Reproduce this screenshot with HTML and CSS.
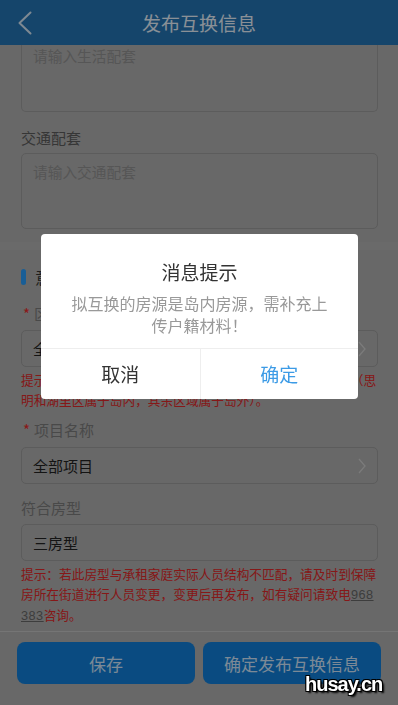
FILE: index.html
```html
<!DOCTYPE html>
<html lang="zh-CN">
<head>
<meta charset="utf-8">
<title>发布互换信息</title>
<link rel="stylesheet" href="styles.css">
</head>
<body>
<div class="app">
  <header class="topbar">
    <span class="back">
      <svg width="14" height="24" viewBox="0 0 14 24"><polyline points="12.5,1.5 1.5,12 12.5,22.5" fill="none" stroke="#d2e4f4" stroke-width="2" stroke-linecap="round" stroke-linejoin="round"/></svg>
    </span>
    <h1 class="title">发布互换信息</h1>
    <span></span>
  </header>

  <main class="form">
    <section class="card">
      <div class="area scrolled">请输入生活配套</div>
      <div class="label">交通配套</div>
      <div class="area tall">请输入交通配套</div>
    </section>
    <div class="gap"></div>
    <section class="card">
      <div class="sec-title"><span class="bar"></span>意向房源</div>
      <div class="label first"><span class="req">*</span>区域</div>
      <div class="select"><span>全部区域</span>
        <svg width="8" height="16" viewBox="0 0 8 16"><polyline points="1,1 7,8 1,15" fill="none" stroke="#cdcdcd" stroke-width="1.3"/></svg>
      </div>
      <p class="tip">提示：若选择区域与房源实际所在区域不一致，请重新选择（思明和湖里区属于岛内，其余区域属于岛外）。</p>
      <div class="label mid"><span class="req">*</span>项目名称</div>
      <div class="select"><span>全部项目</span>
        <svg width="8" height="16" viewBox="0 0 8 16"><polyline points="1,1 7,8 1,15" fill="none" stroke="#cdcdcd" stroke-width="1.3"/></svg>
      </div>
      <div class="label low">符合房型</div>
      <div class="select"><span>三房型</span></div>
      <p class="tip">提示：若此房型与承租家庭实际人员结构不匹配，请及时到保障房所在街道进行人员变更，变更后再发布，如有疑问请致电<span class="tel">968<wbr>383</span>咨询。</p>
    </section>
  </main>

  <footer class="actions">
    <button class="btn">保存</button>
    <button class="btn">确定发布互换信息</button>
  </footer>
</div>

<div class="mask"></div>

<div class="dialog">
  <div class="dlg-title">消息提示</div>
  <div class="dlg-msg">拟互换的房源是岛内房源，需补充上传户籍材料！</div>
  <div class="dlg-btns">
    <div class="dlg-btn">取消</div>
    <div class="dlg-btn ok">确定</div>
  </div>
</div>

<div class="watermark">husay.cn</div>
</body>
</html>
```

FILE: styles.css
```css
* { box-sizing: border-box; margin: 0; padding: 0; }

html, body { width: 398px; height: 705px; overflow: hidden; }

body {
  font-family: "Noto Sans CJK SC", "Noto Sans", sans-serif;
  background: #adadad;
  color: #222;
}

.app {
  display: flex;
  flex-direction: column;
  height: 705px;
}

.topbar {
  flex-shrink: 0;
  height: 45px;
  background: #2474b3;
  display: grid;
  grid-template-columns: 45px 1fr 45px;
  align-items: center;
}

.back {
  display: flex;
  padding-left: 18px;
}

.title {
  font-size: 19px;
  font-weight: 400;
  line-height: 45px;
  text-align: center;
  color: #e6f0fa;
}

.form {
  flex: 1;
  overflow: hidden;
}

.card {
  padding: 0 20px 11px 21px;
}

.area {
  border: 1px solid #999;
  border-radius: 5px;
  padding: 8px 11px;
  font-size: 14.7px;
  line-height: 20px;
  color: #8f8f8f;
}

.area.scrolled {
  height: 67px;
  border-top: none;
  border-radius: 0 0 5px 5px;
  padding-top: 1px;
}

.area.tall { height: 76px; }

.label {
  font-size: 15px;
  line-height: 22px;
  color: #5a5a5a;
  margin: 15px 0 4px;
}

.label.first { margin: 15px 0 5px; color: #7a7a7a; }
.label.mid { margin: 10px 0 6px; color: #7a7a7a; }
.label.low { margin: 13px 0 5px; color: #7a7a7a; }

.req {
  color: #e52a2a;
  margin: 0 4px 0 2px;
}

.gap {
  height: 8px;
  margin-top: 2px;
  background: #b1b1b1;
}

.sec-title {
  display: flex;
  align-items: center;
  gap: 9px;
  padding-top: 16px;
  font-size: 16px;
  line-height: 22px;
  color: #333;
}

.bar {
  width: 5px;
  height: 16px;
  border-radius: 3px;
  background: #2a9dfa;
}

.select {
  height: 37px;
  border: 1px solid #999;
  border-radius: 5px;
  padding: 0 11px;
  display: flex;
  align-items: center;
  justify-content: space-between;
  font-size: 15px;
  color: #222;
}

.tip {
  margin-top: 3px;
  font-size: 12.7px;
  line-height: 19.5px;
  color: #df2828;
}

.tel {
  font-family: "Liberation Sans", sans-serif;
  color: #666;
  text-decoration: underline;
  letter-spacing: 0.5px;
  word-break: keep-all;
}

.actions {
  flex-shrink: 0;
  display: flex;
  gap: 8px;
  padding: 10px 17px 21px;
  border-top: 1px solid #c4c4c4;
}

.btn {
  flex: 1;
  height: 42px;
  border: none;
  border-radius: 8px;
  background: #117ed8;
  color: #cfe4fa;
  font-family: inherit;
  font-size: 17px;
}

.mask {
  position: fixed;
  inset: 0;
  background: rgba(0, 0, 0, 0.4);
}

.dialog {
  position: fixed;
  left: 41px;
  top: 234px;
  width: 317px;
  background: #fff;
  border-radius: 4px;
  overflow: hidden;
}

.dlg-title {
  padding-top: 25px;
  font-size: 19px;
  line-height: 26px;
  text-align: center;
  color: #333;
}

.dlg-msg {
  margin-top: 7px;
  padding: 0 30px 12px;
  font-size: 16px;
  line-height: 22px;
  text-align: center;
  color: #999;
}

.dlg-btns {
  display: grid;
  grid-template-columns: 1fr 1fr;
  border-top: 1px solid #eee;
}

.dlg-btn {
  font-size: 19px;
  line-height: 50px;
  text-align: center;
  color: #333;
}

.dlg-btn.ok {
  border-left: 1px solid #eee;
  color: #3c9be6;
}

.watermark {
  position: fixed;
  left: 305px;
  top: 674px;
  font: bold 20px/20px "Liberation Sans", sans-serif;
  letter-spacing: -1px;
  color: #fff;
  text-shadow: 1px 1px 0 #000, -1px -1px 0 #000, 1px -1px 0 #000, -1px 1px 0 #000, 2px 2px 2px #000;
}
```
